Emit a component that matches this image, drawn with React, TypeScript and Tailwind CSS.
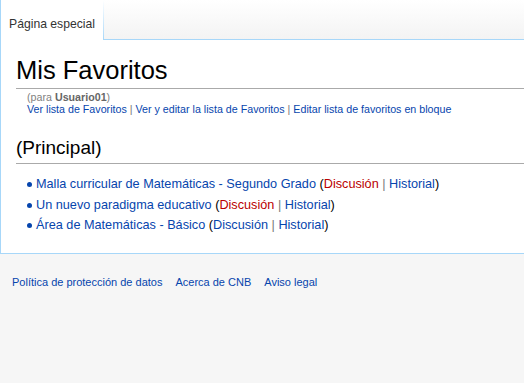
const link = 'text-[#0645ad]'
const red = 'text-[#ba0000]'

function Sep() {
  return <span className="text-[#777]"> | </span>
}

const items = [
  { title: 'Malla curricular de Matemáticas - Segundo Grado', talk: false },
  { title: 'Un nuevo paradigma educativo', talk: false },
  { title: 'Área de Matemáticas - Básico', talk: true },
]

export default function App() {
  return (
    <div className="w-[524px] h-[383px] bg-[#f6f6f6] font-['Liberation_Sans',Arial,sans-serif] text-[#222] overflow-hidden">
      <div className="flex h-[40px] bg-gradient-to-b from-white to-[#f3f3f3]">
        <div className="w-[103px] h-[40px] bg-white flex items-center pl-[8px] pt-[8px] text-[12.2px] text-[#333] border-l border-[#a7d7f9]">
          Página especial
        </div>
        <div className="w-px h-[40px] bg-gradient-to-b from-white to-[#a7d7f9]" />
        <div className="flex-1 h-[40px] border-b border-[#a7d7f9]" />
      </div>
      <div className="bg-white border-l border-b border-[#a7d7f9] h-[214px] pl-[15px] pt-[13px]">
        <h1 className="text-[25.5px] leading-[35px] text-black border-b border-[#aaa]">Mis Favoritos</h1>
        <div className="pl-[11px] pt-[2px] text-[10.7px] leading-[12px]">
          <div className="text-[#7f7f7f]">
            (para <b className="text-[#666]">Usuario01</b>)
          </div>
          <div>
            <span className={link}>Ver lista de Favoritos</span>
            <Sep />
            <span className={link}>Ver y editar la lista de Favoritos</span>
            <Sep />
            <span className={link}>Editar lista de favoritos en bloque</span>
          </div>
        </div>
        <h2 className="mt-[22px] text-[19px] leading-[22px] text-black border-b border-[#aaa] pb-[4px]">(Principal)</h2>
        <ul className="mt-[10px] pl-[20px] text-[12.7px] leading-[20.5px]">
          {items.map((it) => (
            <li key={it.title} className="relative">
              <span className="absolute w-[5px] h-[5px] rounded-full bg-[#0645ad] -left-[9px] top-[8px]" />
              <span className={link}>{it.title}</span> <span className="text-black">(</span>
              <span className={it.talk ? link : red}>Discusión</span>
              <Sep />
              <span className={link}>Historial</span>
              <span className="text-black">)</span>
            </li>
          ))}
        </ul>
      </div>
      <div className="flex gap-[13px] pl-[12px] pt-[21px] text-[11px] leading-[14px]">
        <span className={link}>Política de protección de datos</span>
        <span className={link}>Acerca de CNB</span>
        <span className={link}>Aviso legal</span>
      </div>
    </div>
  )
}
